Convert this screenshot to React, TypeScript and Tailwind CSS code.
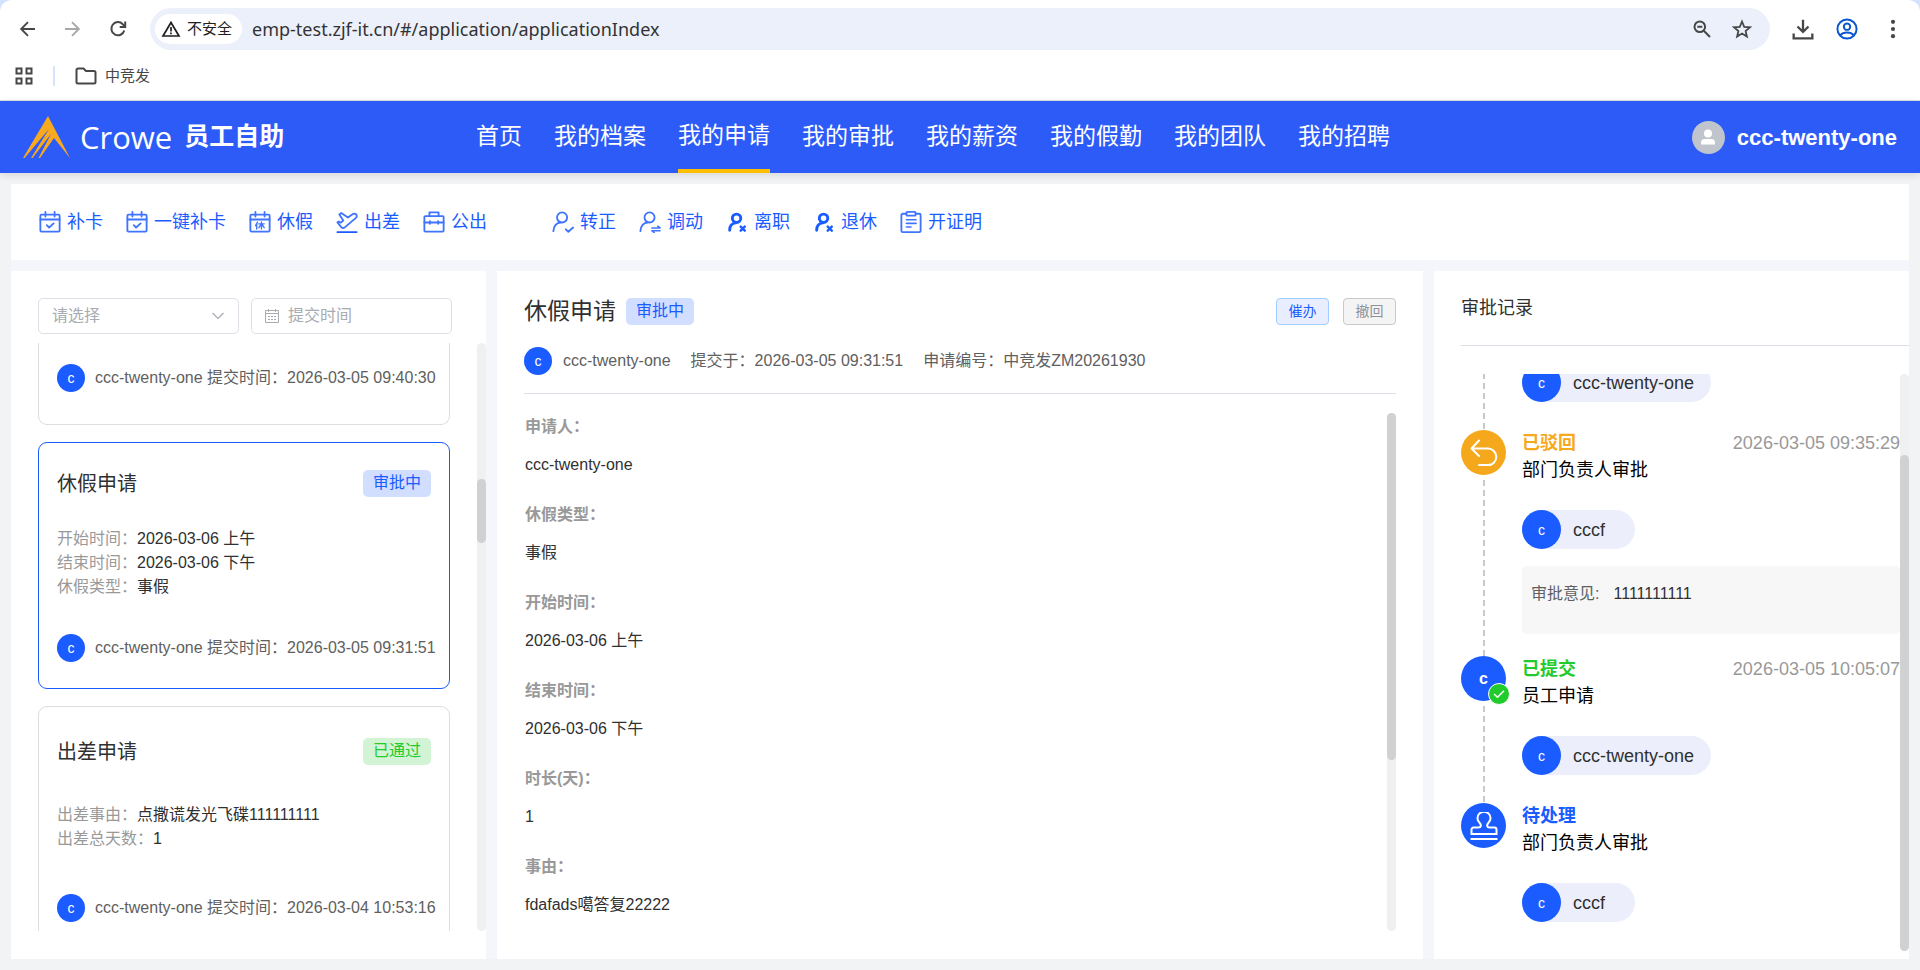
import { useState } from "react";
import type { ReactNode } from "react";

type Field = { label: string; value: string };

type Application = {
  title: string;
  status: "pending" | "passed";
  fields: Field[];
  time: string;
};

type RecordItem = {
  node: "return" | "submit" | "seal";
  title: string;
  color: string;
  time?: string;
  step: string;
  user: string;
  comment?: string;
};

const navItems = ["首页", "我的档案", "我的申请", "我的审批", "我的薪资", "我的假勤", "我的团队", "我的招聘"];

const applications: Application[] = [
  {
    title: "休假申请",
    status: "pending",
    fields: [
      { label: "开始时间：", value: "2026-03-06 上午" },
      { label: "结束时间：", value: "2026-03-06 下午" },
      { label: "休假类型：", value: "事假" },
    ],
    time: "2026-03-05 09:31:51",
  },
  {
    title: "出差申请",
    status: "passed",
    fields: [
      { label: "出差事由：", value: "点撒谎发光飞碟111111111" },
      { label: "出差总天数：", value: "1" },
    ],
    time: "2026-03-04 10:53:16",
  },
];

const details: Field[] = [
  { label: "申请人：", value: "ccc-twenty-one" },
  { label: "休假类型：", value: "事假" },
  { label: "开始时间：", value: "2026-03-06 上午" },
  { label: "结束时间：", value: "2026-03-06 下午" },
  { label: "时长(天)：", value: "1" },
  { label: "事由：", value: "fdafads噶答复22222" },
];

const records: RecordItem[] = [
  {
    node: "return",
    title: "已驳回",
    color: "text-[#f7a81b]",
    time: "2026-03-05 09:35:29",
    step: "部门负责人审批",
    user: "cccf",
    comment: "1111111111",
  },
  {
    node: "submit",
    title: "已提交",
    color: "text-[#22cb2c]",
    time: "2026-03-05 10:05:07",
    step: "员工申请",
    user: "ccc-twenty-one",
  },
  {
    node: "seal",
    title: "待处理",
    color: "text-[#1a5cff]",
    step: "部门负责人审批",
    user: "cccf",
  },
];

function QuickIcon({ children, width = 2 }: { children: ReactNode; width?: number }) {
  return (
    <svg
      viewBox="0 0 24 24"
      className="size-[22px] shrink-0"
      fill="none"
      stroke="#3f74ff"
      strokeWidth={width}
      strokeLinecap="round"
      strokeLinejoin="round"
    >
      {children}
    </svg>
  );
}

const calendarFrame = (
  <>
    <rect x="1.5" y="4" width="21" height="18.5" rx="1.2" />
    <path d="M1.5 9.3h21M7 1v5M17 1v5" />
  </>
);

// person with a small cross, used by both leaving actions
const personCross = (
  <>
    <circle cx="11.5" cy="8" r="4.6" stroke="#1a5cff" />
    <path d="M4 21c0-4.5 2.5-7.500 6.500-8" stroke="#1a5cff" />
    <path d="M16 17l4.500 4.500M20.500 17L16 21.500" stroke="#1a5cff" strokeWidth="2.600" />
  </>
);

const attendanceActions = [
  { label: "补卡", icon: <QuickIcon>{calendarFrame}<path d="M8.5 15.5l2.5 2.5 5-4.5" /></QuickIcon> },
  { label: "一键补卡", icon: <QuickIcon>{calendarFrame}<path d="M8.5 15.5l2.5 2.5 5-4.5" /></QuickIcon> },
  {
    label: "休假",
    icon: (
      <QuickIcon>
        {calendarFrame}
        <path d="M9.3 12l-2.1 4M8.4 14v5.6M10.6 14h6M13.6 12v7.6M13.4 14.2l-2.6 4M13.8 14.2l2.8 4" strokeWidth="1.5" />
      </QuickIcon>
    ),
  },
  {
    label: "出差",
    icon: (
      <QuickIcon>
        <path d="M1.500 12.500l4.500 5.300c1 1 2.200 1 3.300.3L22 7.200c1.200-1.100.8-3.200-.8-4-1.200-.5-2.300-.3-3.200.4L13 7.200 5.800 2.300 3.600 3.800l4.300 6.600-2.600 2.300-2.300-1.300z" />
        <path d="M1.500 23h21" stroke="#1a5cff" />
      </QuickIcon>
    ),
  },
  {
    label: "公出",
    icon: (
      <QuickIcon>
        <rect x="1.500" y="5.500" width="21" height="17" rx="1" />
        <path d="M7 5.500V1.500h10v4M1.500 12.500h21M7.500 11v3M16.500 11v3" />
      </QuickIcon>
    ),
  },
];

const staffActions = [
  {
    label: "转正",
    icon: (
      <QuickIcon>
        <circle cx="11" cy="7" r="5.500" />
        <path d="M1.500 22c.3-5.500 3.500-9.500 8-9.500M15 20l2.800 2.600L23 18" />
      </QuickIcon>
    ),
  },
  {
    label: "调动",
    icon: (
      <QuickIcon>
        <circle cx="11.500" cy="7" r="5.500" />
        <path d="M1.500 22c.3-5.500 3.500-9.500 8-9.500" />
        <path d="M14 18.500h9l-2.500-2M23 21.500h-9l2.500 2" strokeWidth="1.700" />
      </QuickIcon>
    ),
  },
  { label: "离职", icon: <QuickIcon width={3.2}>{personCross}</QuickIcon> },
  { label: "退休", icon: <QuickIcon width={3.2}>{personCross}</QuickIcon> },
  {
    label: "开证明",
    icon: (
      <QuickIcon>
        <path d="M7 3H3a1.500 1.500 0 0 0-1.500 1.500v17A1.500 1.500 0 0 0 3 23h18a1.500 1.500 0 0 0 1.500-1.500v-17A1.500 1.500 0 0 0 21 3h-4" />
        <rect x="7" y="1" width="10" height="4" rx="1" />
        <path d="M7 9.500h10.500M7 13.500h10.500M7 17.500h5" strokeWidth="1.800" />
      </QuickIcon>
    ),
  },
];

function Avatar() {
  return (
    <span className="flex size-7 shrink-0 items-center justify-center rounded-full bg-[#1a5cff] text-sm leading-none text-white">
      c
    </span>
  );
}

function StatusTag({ status }: { status: Application["status"] }) {
  return status === "pending" ? (
    <span className="h-[27px] rounded-[5px] bg-[#d1deff] px-2.5 text-base leading-[26px] text-[#1a5cff]">审批中</span>
  ) : (
    <span className="h-[27px] rounded-[5px] bg-[#d2f4d4] px-2.5 text-base leading-[26px] text-[#22cb2c]">已通过</span>
  );
}

function CardFooter({ time }: { time: string }) {
  return (
    <div className="flex h-10 items-center gap-2.5 whitespace-nowrap text-base text-[#606060]">
      <Avatar />
      <span>ccc-twenty-one 提交时间：{time}</span>
    </div>
  );
}

function Toolbar() {
  return (
    <div className="bg-[#d3e3fd]">
      <div className="flex h-[101px] flex-col rounded-t-[12px] border-b border-[#dcdfe4] bg-white">
        <div className="flex h-14 items-center pt-0.5 pr-4 pl-[18px] text-[#474747]">
          <button aria-label="后退">
            <svg viewBox="0 0 20 20" className="size-5" fill="none" stroke="currentColor" strokeWidth="1.900">
              <path d="M17 10H3.500M10 3.200L3.200 10l6.800 6.800" />
            </svg>
          </button>
          <button aria-label="前进" className="ml-6 text-[#a8a8a8]">
            <svg viewBox="0 0 20 20" className="size-5" fill="none" stroke="currentColor" strokeWidth="1.900">
              <path d="M3 10h13.500M10 3.200l6.800 6.800-6.800 6.800" />
            </svg>
          </button>
          <button aria-label="刷新" className="ml-[26px]">
            <svg viewBox="0 0 20 20" className="size-5" fill="none" stroke="currentColor" strokeWidth="2">
              <path d="M16.300 11.500A6.600 6.600 0 1 1 14.800 5.200L17 7.400" />
              <path d="M17.200 2.500v5.500h-5.500" />
            </svg>
          </button>
          <div className="ml-[22px] flex h-[42px] flex-1 items-center rounded-full bg-[#ecf0fa] pr-[18px] pl-[5px]">
            <button className="flex h-[30px] items-center gap-1.5 rounded-full bg-white pr-2.5 pl-1.5 text-[15px] text-[#1f1f1f]">
              <svg viewBox="0 0 20 20" className="size-5" fill="none" stroke="currentColor" strokeWidth="1.700">
                <path d="M10 3.500L18 17H2z" />
                <path d="M10 8v4.500M10 13.500v1.700" />
              </svg>
              不安全
            </button>
            <input
              aria-label="地址"
              defaultValue="emp-test.zjf-it.cn/#/application/applicationIndex"
              className="ml-2.5 flex-1 bg-transparent font-['Noto_Sans',sans-serif] text-lg text-[#333] outline-none"
            />
            <button aria-label="缩放">
              <svg viewBox="0 0 20 20" className="size-5" fill="none" stroke="currentColor" strokeWidth="2">
                <circle cx="7.800" cy="7.800" r="5.300" />
                <path d="M11.800 11.800l6.200 6.200M5.300 7.800h5" />
              </svg>
            </button>
            <button aria-label="收藏" className="ml-5">
              <svg viewBox="0 0 20 20" className="size-5" fill="none" stroke="currentColor" strokeWidth="1.800">
                <path d="M10 2.500l2.200 5.300 5.700.5-4.300 3.700 1.300 5.600-4.900-3-4.900 3 1.300-5.600L2.100 8.300l5.700-.5z" />
              </svg>
            </button>
          </div>
          <button aria-label="下载" className="ml-[22px]">
            <svg viewBox="0 0 20 20" className="size-[22px]" fill="none" stroke="currentColor" strokeWidth="2.100">
              <path d="M10 1.500v11M5 7.700l5 5 5-5M1.500 14v4.500h17V14" />
            </svg>
          </button>
          <button aria-label="用户" className="ml-[22px] text-[#0b57d0]">
            <svg viewBox="0 0 20 20" className="size-[22px]" fill="none" stroke="currentColor" strokeWidth="1.800">
              <circle cx="10" cy="10" r="8.700" />
              <circle cx="10" cy="7.900" r="2.900" />
              <path d="M3.800 15.800c3-3.400 9.400-3.400 12.400 0" />
            </svg>
          </button>
          <button aria-label="更多" className="ml-6">
            <svg viewBox="0 0 20 20" className="size-[22px]" fill="currentColor">
              <circle cx="10" cy="3.500" r="1.900" />
              <circle cx="10" cy="10" r="1.900" />
              <circle cx="10" cy="16.500" r="1.900" />
            </svg>
          </button>
        </div>
        <div className="flex flex-1 items-center pb-1 pl-[14px] text-[15px] text-[#474747]">
          <button aria-label="应用">
            <svg viewBox="0 0 20 20" className="size-5" fill="none" stroke="currentColor" strokeWidth="2">
              <path d="M2.500 2.500h5v5h-5zM12.500 2.500h5v5h-5zM2.500 12.500h5v5h-5zM12.500 12.500h5v5h-5z" />
            </svg>
          </button>
          <span className="ml-[19px] h-5 w-0.5 bg-[#d3e3fd]" />
          <button className="ml-5 flex items-center gap-2">
            <svg viewBox="0 0 22 18" className="h-[18px] w-[22px]" fill="none" stroke="currentColor" strokeWidth="2">
              <path d="M3 1.500h5.500l2.500 2.500H19a1.500 1.500 0 0 1 1.500 1.500V15a1.500 1.500 0 0 1-1.500 1.500H3A1.500 1.500 0 0 1 1.500 15V3A1.500 1.500 0 0 1 3 1.500z" />
            </svg>
            中竞发
          </button>
        </div>
      </div>
    </div>
  );
}

function Header() {
  const [active, setActive] = useState<string>("我的申请");

  return (
    <header className="relative flex h-[72px] shrink-0 items-center bg-[#2d5bf8] px-[23px] text-white shadow-[0_2px_8px_rgba(0,0,0,0.12)]">
      <div className="flex w-[453px] items-center">
        <svg viewBox="0 0 47 42" className="h-[42px] w-[47px]" fill="#f9a91f">
          <path d="M25 0L47 42 31 22 17 42h-1.500L28 18 9.500 42H8L26 13 1.500 42H0z" />
        </svg>
        <span className="ml-2.5 font-['Open_Sans',sans-serif] text-[31px] leading-none">Crowe</span>
        <span className="ml-3 text-[25px] font-bold">员工自助</span>
      </div>
      <nav className="flex h-full gap-8 text-[23px]">
        {navItems.map((item) => (
          <a
            key={item}
            href="#/application"
            onClick={() => setActive(item)}
            className={
              item === active
                ? "flex items-center border-b-4 border-[#ffbe00]"
                : "flex items-center pb-0.5"
            }
          >
            {item}
          </a>
        ))}
      </nav>
      <div className="ml-auto flex items-center gap-3">
        <span className="flex size-[33px] items-center justify-center rounded-full bg-[#c0c4cc]">
          <svg viewBox="0 0 16 16" className="size-4" fill="#fff">
            <circle cx="8" cy="4.500" r="4" />
            <path d="M1 15.500v-2.300C1 11.400 2.400 10 4.200 10h7.600c1.800 0 3.200 1.400 3.200 3.200v2.300z" />
          </svg>
        </span>
        <span className="text-[22px] font-bold">ccc-twenty-one</span>
      </div>
    </header>
  );
}

function QuickActions() {
  return (
    <div className="flex h-[76px] shrink-0 items-center gap-[65px] bg-white pl-7 text-lg text-[#1a5cff]">
      <div className="flex gap-[23px]">
        {attendanceActions.map((action) => (
          <button key={action.label} className="flex items-center gap-1.5">
            {action.icon}
            {action.label}
          </button>
        ))}
      </div>
      <div className="flex gap-[23px]">
        {staffActions.map((action) => (
          <button key={action.label} className="flex items-center gap-1.5">
            {action.icon}
            {action.label}
          </button>
        ))}
      </div>
    </div>
  );
}

function ApplicationList() {
  const [selected, setSelected] = useState<string>("休假申请");

  return (
    <section className="flex w-[475px] shrink-0 flex-col bg-white pt-[27px] pb-7 pl-[27px]">
      <div className="mr-[34px] grid grid-cols-2 gap-3">
        <div className="relative">
          <select
            aria-label="申请类型"
            className="h-9 w-full appearance-none rounded-[5px] border border-[#dcdfe6] bg-white px-[13px] text-base text-[#a8abb2]"
          >
            <option>请选择</option>
          </select>
          <svg viewBox="0 0 14 14" className="pointer-events-none absolute top-[11px] right-3.5 size-3.5" fill="none" stroke="#a8abb2" strokeWidth="1.200">
            <path d="M1.500 4L7 9.500 12.500 4" />
          </svg>
        </div>
        <label className="flex h-9 items-center gap-2 rounded-[5px] border border-[#dcdfe6] pl-3">
          <svg viewBox="0 0 16 16" className="size-4 shrink-0" fill="none" stroke="#a8abb2">
            <path d="M1.500 2.500h13v12h-13zM1.500 5.500h13M4.500 1v3M11.500 1v3" />
            <path d="M4 8.500h8M4 11.500h8" strokeDasharray="2 1" />
          </svg>
          <input
            aria-label="提交时间"
            placeholder="提交时间"
            className="w-full min-w-0 bg-transparent text-base outline-none placeholder:text-[#a8abb2]"
          />
        </label>
      </div>

      <div className="mt-[9px] flex min-h-0 flex-1 justify-between">
        <div className="flex w-[412px] flex-col gap-[17px] overflow-hidden">
          {/* tail of the card scrolled past the top */}
          <div className="flex h-[82px] shrink-0 flex-col justify-end rounded-b-[9px] border border-t-0 border-[#dcdfe0] px-[18px] pb-[26px]">
            <CardFooter time="2026-03-05 09:40:30" />
          </div>
          {applications.map((app) => (
            <article
              key={app.title}
              onClick={() => setSelected(app.title)}
              className={
                app.title === selected
                  ? "flex h-[247px] shrink-0 flex-col justify-around rounded-[9px] border border-[#1a5cff] px-[18px] py-2.5"
                  : "flex h-[247px] shrink-0 flex-col justify-around rounded-[9px] border border-[#dcdfe0] px-[18px] py-2.5"
              }
            >
              <div className="flex h-10 items-center justify-between">
                <h3 className="text-xl text-[#303030]">{app.title}</h3>
                <StatusTag status={app.status} />
              </div>
              <ul className="pt-0.5 text-base leading-6 text-[#303030]">
                {app.fields.map((field) => (
                  <li key={field.label}>
                    <span className="text-[#999]">{field.label}</span>
                    {field.value}
                  </li>
                ))}
              </ul>
              <div className="pt-2">
                <CardFooter time={app.time} />
              </div>
            </article>
          ))}
        </div>
        <div className="w-[9px] rounded-full bg-[#f0f0f0] pt-[136px]">
          <div className="h-16 rounded-full bg-[#d0d1d3]" />
        </div>
      </div>
    </section>
  );
}

function ApplicationDetail() {
  return (
    <section className="flex min-w-0 flex-1 flex-col bg-white px-[27px] pt-[27px] pb-7">
      <div className="flex h-[27px] items-center">
        <h2 className="text-[23px] leading-[27px] text-[#303030]">休假申请</h2>
        <span className="ml-2.5 flex">
          <StatusTag status="pending" />
        </span>
        <button className="ml-auto h-[27px] w-[53px] rounded-[4px] border border-[#9fceff] bg-[#e8eeff] text-sm leading-[25px] text-[#1a5cff]">
          催办
        </button>
        <button className="ml-3.5 h-[27px] w-[53px] rounded-[4px] border border-[#c8c9cc] bg-[#f4f4f5] text-sm leading-[25px] text-[#909399]">
          撤回
        </button>
      </div>
      <div className="mt-[22px] flex h-[47px] items-start gap-5 border-b border-[#dcdfe6] text-base leading-7 text-[#606060]">
        <div className="flex gap-[11px]">
          <Avatar />
          <span>ccc-twenty-one</span>
        </div>
        <span>提交于：2026-03-05 09:31:51</span>
        <span>申请编号：中竞发ZM20261930</span>
      </div>
      <div className="mt-[19px] flex min-h-0 flex-1 justify-between">
        <dl className="overflow-hidden pt-px pl-px text-base leading-[26px] text-[#303030]">
          {details.map((item) => (
            <div key={item.label} className="mb-6">
              <dt className="mb-3 font-bold text-[#999]">{item.label}</dt>
              <dd>{item.value}</dd>
            </div>
          ))}
        </dl>
        <div className="w-[9px] rounded-full bg-[#f0f0f0]">
          <div className="h-[67%] rounded-full bg-[#d0d1d3]" />
        </div>
      </div>
    </section>
  );
}

function UserPill({ name }: { name: string }) {
  return (
    <div className="flex h-[39px] w-fit min-w-[113px] items-center gap-3 rounded-full bg-[#eceffb] pr-[17px] text-lg text-[#303030]">
      <span className="flex size-[39px] items-center justify-center rounded-full bg-[#1a5cff] text-sm leading-none text-white">
        c
      </span>
      {name}
    </div>
  );
}

function DashedLine() {
  return (
    <div className="w-0.5 flex-1 bg-[repeating-linear-gradient(to_bottom,#c8c9cc_0_6px,transparent_6px_10px)]" />
  );
}

function TimelineNode({ kind }: { kind: RecordItem["node"] }) {
  if (kind === "return") {
    return (
      <span className="flex size-[45px] shrink-0 items-center justify-center rounded-full bg-[#f5a81c]">
        <svg viewBox="0 0 28 28" className="size-7" fill="none" stroke="#fff" strokeWidth="2" strokeLinecap="round" strokeLinejoin="round">
          <path d="M9 1.500L1.500 9.500l7.500 7.500M1.500 9.500h16.500a8.300 8.300 0 0 1 0 16.600H9" />
        </svg>
      </span>
    );
  }
  if (kind === "submit") {
    return (
      <span className="relative flex size-[45px] shrink-0 items-center justify-center rounded-full bg-[#1a5cff] text-base leading-none font-bold text-white">
        c
        <span className="absolute -right-1 -bottom-1 flex size-[22px] items-center justify-center rounded-full border border-white bg-[#22cb2c]">
          <svg viewBox="0 0 12 12" className="size-3" fill="none" stroke="#fff" strokeWidth="1.500">
            <path d="M1 6l3.500 3.300L11 2.800" />
          </svg>
        </span>
      </span>
    );
  }
  return (
    <span className="flex size-[45px] shrink-0 items-center justify-center rounded-full bg-[#1a5cff]">
      <svg viewBox="0 0 28 28" className="size-7" fill="none" stroke="#fff" strokeWidth="2">
        <path d="M1.500 22v-4.500a2 2 0 0 1 2-2h5c2.700 0 3-2.500 1.200-4.500a6.500 6.500 0 1 1 8.600 0c-1.800 2-1.500 4.500 1.200 4.500h5a2 2 0 0 1 2 2V22z" />
        <path d="M.5 27h27" />
      </svg>
    </span>
  );
}

function ApprovalRecords() {
  return (
    <section className="flex w-[475px] shrink-0 flex-col bg-white pt-6 pb-2 pl-[27px]">
      <h2 className="h-[51px] border-b border-[#dcdfe6] text-lg leading-[27px] text-[#303030]">审批记录</h2>
      <div className="mt-7 flex min-h-0 flex-1">
        <div className="flex-1 overflow-hidden">
          <ol className="-mt-[11px]">
            <li className="flex gap-4">
              <div className="flex w-[45px] flex-col items-center">
                <DashedLine />
              </div>
              <div className="pb-7">
                <UserPill name="ccc-twenty-one" />
              </div>
            </li>
            {records.map((record, index) => (
              <li key={index} className="flex gap-4">
                <div className="flex w-[45px] flex-col items-center gap-[5px]">
                  <TimelineNode kind={record.node} />
                  {index < records.length - 1 && <DashedLine />}
                </div>
                <div className="flex-1 pb-[22px] text-lg leading-[27px]">
                  <div className="flex justify-between">
                    <span className={`font-bold ${record.color}`}>{record.title}</span>
                    <span className="text-[#999]">{record.time}</span>
                  </div>
                  <p className="mb-[26px] text-black">{record.step}</p>
                  <div className="pb-1.5">
                    <UserPill name={record.user} />
                  </div>
                  {record.comment && (
                    <div className="mt-[11px] flex h-[68px] gap-3.5 rounded-[5px] bg-[#f7f7f7] px-[9px] pt-4 text-base">
                      <span className="text-[#606060]">审批意见:</span>
                      <span className="text-[#303030]">{record.comment}</span>
                    </div>
                  )}
                </div>
              </li>
            ))}
          </ol>
        </div>
        <div className="flex w-[9px] flex-col justify-end rounded-full bg-[#f0f0f0]">
          <div className="h-[86%] rounded-full bg-[#d0d1d3]" />
        </div>
      </div>
    </section>
  );
}

export default function App() {
  return (
    <div className="flex h-screen flex-col overflow-hidden bg-[#f1f3f5] font-['Liberation_Sans','Noto_Sans_CJK_SC',sans-serif]">
      <Toolbar />
      <Header />
      <main className="flex min-h-0 flex-1 flex-col p-[11px]">
        <div className="flex min-h-0 flex-1 flex-col gap-[11px] bg-[#f4f6fc]">
          <QuickActions />
          <div className="flex min-h-0 flex-1 gap-[11px]">
            <ApplicationList />
            <ApplicationDetail />
            <ApprovalRecords />
          </div>
        </div>
      </main>
    </div>
  );
}
